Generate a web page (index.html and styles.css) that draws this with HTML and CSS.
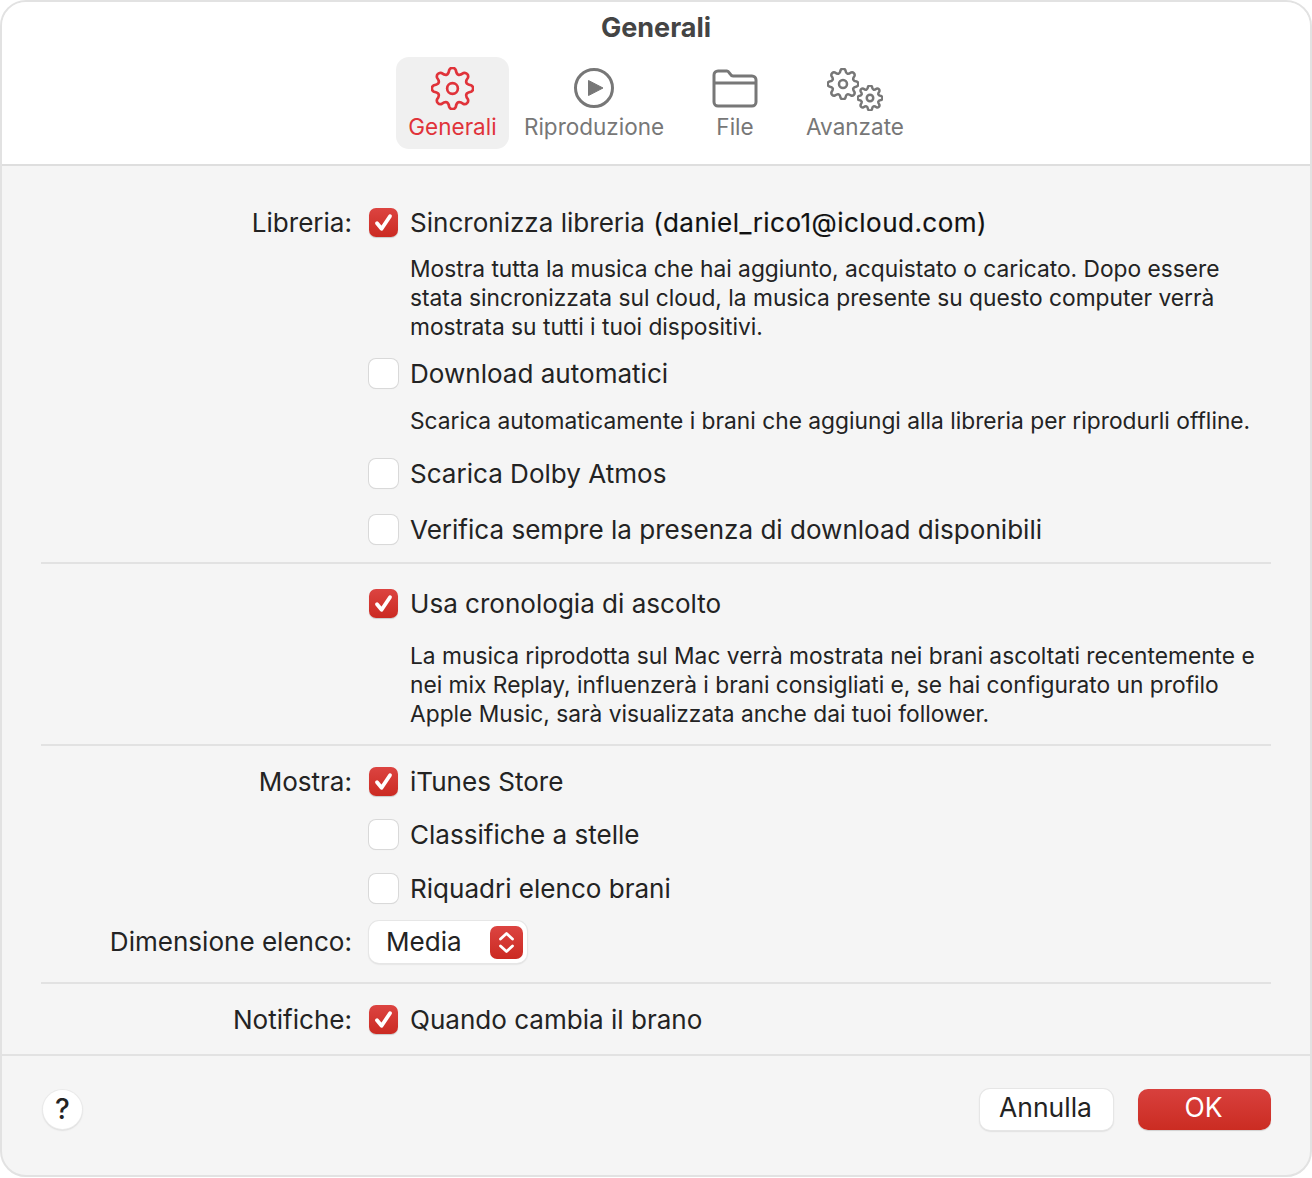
FILE: index.html
```html
<!DOCTYPE html>
<html lang="it">
<head>
<meta charset="utf-8">
<title>Generali</title>
<link rel="stylesheet" href="styles.css">
</head>
<body>
<svg class="defs" width="0" height="0" aria-hidden="true">
  <symbol id="gear" viewBox="0 0 48 48">
    <path d="M20.35 3.32A4 4 0 0 1 27.65 3.32Q28.98 11.99 36.05 6.8A4 4 0 0 1 41.2 11.95Q36.01 19.02 44.68 20.35A4 4 0 0 1 44.68 27.65Q36.01 28.98 41.2 36.05A4 4 0 0 1 36.05 41.2Q28.98 36.01 27.65 44.68A4 4 0 0 1 20.35 44.68Q19.02 36.01 11.95 41.2A4 4 0 0 1 6.8 36.05Q11.99 28.98 3.32 27.65A4 4 0 0 1 3.32 20.35Q11.99 19.02 6.8 11.95A4 4 0 0 1 11.95 6.8Q19.02 11.99 20.35 3.32Z"/>
    <circle cx="24" cy="24" r="6"/>
  </symbol>
  <symbol id="check" viewBox="0 0 29 29">
    <path d="M8 15.2l4.6 5.6L21 8.2"/>
  </symbol>
</svg>
<main class="window">
  <header class="header">
    <h1 class="title">Generali</h1>
    <nav class="tabs">
      <div class="tab tab-active">
        <svg class="gear-main" viewBox="0 0 48 48"><use href="#gear"/></svg>
        <span>Generali</span>
      </div>
      <div class="tab tab-play">
        <svg class="tab-icon" viewBox="0 0 48 48"><circle class="ring" cx="24" cy="24" r="18.500"/><path class="play" d="M18.500 16.500L33 24L18.500 31.500Z"/></svg>
        <span>Riproduzione</span>
      </div>
      <div class="tab tab-file">
        <svg class="tab-icon" viewBox="0 0 48 48"><path class="ring" d="M3 11a4 4 0 0 1 4-4h9c2.500 0 3 5 6 5h19a4 4 0 0 1 4 4v22a4 4 0 0 1-4 4H7a4 4 0 0 1-4-4zM3 19h42"/></svg>
        <span>File</span>
      </div>
      <div class="tab tab-adv">
        <span class="gears">
          <svg class="gear-big" viewBox="0 0 48 48"><use href="#gear"/></svg>
          <svg class="gear-small" viewBox="0 0 48 48"><use href="#gear"/></svg>
        </span>
        <span>Avanzate</span>
      </div>
    </nav>
  </header>

  <section class="content">
    <div class="group group-first">
      <div class="row">
        <span class="label">Libreria:</span>
        <span class="box on"><svg viewBox="0 0 29 29"><use href="#check"/></svg></span>
        <span class="text">Sincronizza libreria <span class="email">(daniel_rico1@icloud.com)</span></span>
      </div>
      <p class="desc desc-top">Mostra tutta la musica che hai aggiunto, acquistato o caricato. Dopo essere<br>stata sincronizzata sul cloud, la musica presente su questo computer verrà<br>mostrata su tutti i tuoi dispositivi.</p>
      <div class="row after-desc">
        <span class="label"></span>
        <span class="box"></span>
        <span class="text">Download automatici</span>
      </div>
      <p class="desc">Scarica automaticamente i brani che aggiungi alla libreria per riprodurli offline.</p>
      <div class="row gap-24">
        <span class="label"></span>
        <span class="box"></span>
        <span class="text">Scarica Dolby Atmos</span>
      </div>
      <div class="row gap-26">
        <span class="label"></span>
        <span class="box"></span>
        <span class="text">Verifica sempre la presenza di download disponibili</span>
      </div>
    </div>

    <div class="group group-history">
      <div class="row">
        <span class="label"></span>
        <span class="box on"><svg viewBox="0 0 29 29"><use href="#check"/></svg></span>
        <span class="text">Usa cronologia di ascolto</span>
      </div>
      <p class="desc desc-history">La musica riprodotta sul Mac verrà mostrata nei brani ascoltati recentemente e<br>nei mix Replay, influenzerà i brani consigliati e, se hai configurato un profilo<br>Apple Music, sarà visualizzata anche dai tuoi follower.</p>
    </div>

    <div class="group group-show">
      <div class="row">
        <span class="label">Mostra:</span>
        <span class="box on"><svg viewBox="0 0 29 29"><use href="#check"/></svg></span>
        <span class="text">iTunes Store</span>
      </div>
      <div class="row gap-23">
        <span class="label"></span>
        <span class="box"></span>
        <span class="text">Classifiche a stelle</span>
      </div>
      <div class="row gap-24">
        <span class="label"></span>
        <span class="box"></span>
        <span class="text">Riquadri elenco brani</span>
      </div>
      <div class="row gap-23">
        <span class="label">Dimensione elenco:</span>
        <span class="select">
          <span class="select-value">Media</span>
          <span class="stepper"><svg viewBox="0 0 33 33"><path d="M10.500 13L16.500 7.500L22.500 13M10.500 20L16.500 25.500L22.500 20"/></svg></span>
        </span>
      </div>
    </div>

    <div class="group group-last">
      <div class="row">
        <span class="label">Notifiche:</span>
        <span class="box on"><svg viewBox="0 0 29 29"><use href="#check"/></svg></span>
        <span class="text">Quando cambia il brano</span>
      </div>
    </div>
  </section>

  <footer class="footer">
    <button class="help" type="button">?</button>
    <div class="actions">
      <button class="btn" type="button">Annulla</button>
      <button class="btn btn-ok" type="button">OK</button>
    </div>
  </footer>
</main>
</body>
</html>
```

FILE: styles.css
```css
* { box-sizing: border-box; }
html, body { margin: 0; padding: 0; background: #fff; }
body { width: 1312px; height: 1178px; font-family: Inter, "Liberation Sans", sans-serif; color: #232323; }
.defs { position: absolute; }
.window {
  width: 1312px; height: 1177px;
  border: 2px solid #e2e2e2; border-radius: 26px;
  background: #f5f5f5; overflow: hidden;
  display: flex; flex-direction: column;
}
.header { height: 164px; background: #fff; border-bottom: 2px solid #dedede; flex: none; }
.title { margin: 0; padding-top: 9px; height: 55px; font-size: 27px; line-height: 34px; font-weight: 700; color: #444; text-align: center; }
.tabs { display: flex; justify-content: center; padding-left: 3px; }
.tab {
  width: 113px; height: 92px;
  display: flex; flex-direction: column; align-items: center;
  font-size: 22.500px; line-height: 28px; color: #777; border-radius: 13px;
}
.tab span { white-space: nowrap; }
.tab-active { background: #f0f0f0; color: #e0333a; }
.tab-play { width: 170px; }
.tab-file { width: 112px; }
.tab-adv { width: 128px; }
.tab-icon { width: 48px; height: 48px; margin-top: 7px; margin-bottom: 1px; display: block; overflow: visible; }
.gear-main { width: 43px; height: 43px; margin-top: 10px; margin-bottom: 3px; display: block; fill: none; stroke: #e0333a; stroke-width: 3; }
.ring { fill: none; stroke: #777; stroke-width: 3; }
.play { fill: #777; stroke: #777; stroke-width: 1; stroke-linejoin: round; }
.gears { position: relative; display: block; width: 56px; height: 48px; margin-top: 7px; margin-bottom: 1px; }
.gear-big, .gear-small { position: absolute; fill: none; stroke: #777; }
.gear-big { left: 0; top: 4px; width: 32px; height: 32px; stroke-width: 3.800; }
.gear-small { left: 30px; top: 21px; width: 26px; height: 26px; stroke-width: 4.600; }

.content { flex: 1; padding: 0 39px; }
.group { border-bottom: 2px solid #e2e2e2; }
.group-first { padding-top: 42px; padding-bottom: 17px; }
.group-history { padding-top: 25px; padding-bottom: 16px; }
.group-show { padding-top: 21px; padding-bottom: 25px; }
.group-last { padding-top: 21px; border-bottom: none; }
.row { display: flex; align-items: center; height: 30px; font-size: 26.050px; line-height: 30px; }
.label { width: 311px; margin-right: 17px; flex: none; text-align: right; }
.text { margin-left: 12px; white-space: nowrap; }
.email { color: #111; margin-left: 1px; letter-spacing: .45px; -webkit-text-stroke: .15px #111; }
.box {
  width: 29px; height: 29px; flex: none; margin-top: -2px; border-radius: 7px; background: #fff;
  box-shadow: 0 0 0 1px #d9d9d9, 0 1px 1px rgba(0,0,0,.1);
  display: block;
}
.box svg { display: block; width: 29px; height: 29px; fill: none; stroke: #fff; stroke-width: 3.800; stroke-linecap: round; stroke-linejoin: round; }
.box.on { background: linear-gradient(#dc4441, #cb2a22); box-shadow: 0 1px 1px rgba(0,0,0,.18); }
.desc { margin: 17px 0 0 369px; font-size: 22.750px; line-height: 29px; white-space: nowrap; }
.desc-top { margin-top: 16px; }
.desc-history { margin-top: 22px; }
.after-desc { margin-top: 18px; }
.gap-23 { margin-top: 23px; }
.gap-24 { margin-top: 24px; }
.gap-26 { margin-top: 26px; }
.select {
  width: 158px; height: 42px; flex: none; border-radius: 10px; background: #fff;
  box-shadow: 0 0 0 1px #e6e6e6, 0 1px 2px rgba(0,0,0,.2);
  display: flex; align-items: center; justify-content: space-between; padding: 0 4px 0 17px;
}
.stepper { width: 33px; height: 33px; border-radius: 7px; background: linear-gradient(#dc4441, #cb2a22); display: block; }
.stepper svg { display: block; width: 33px; height: 33px; fill: none; stroke: #fff; stroke-width: 2.800; stroke-linecap: round; stroke-linejoin: round; }

.footer {
  height: 121px; flex: none; border-top: 2px solid #e2e2e2;
  display: flex; justify-content: space-between; align-items: flex-start;
  padding: 33px 39px 0 41px;
}
.help {
  width: 39px; height: 39px; margin-top: 1px; padding: 0; border: none; border-radius: 50%; background: #fff;
  box-shadow: 0 0 0 1px #eaeaea, 0 1px 2px rgba(0,0,0,.25);
  font: 500 28px/39px Inter, "Liberation Sans", sans-serif; color: #232323;
}
.actions { display: flex; gap: 25px; }
.btn {
  width: 133px; height: 41px; padding: 0 2px 4px 0; border: none; border-radius: 10px; background: #fff;
  box-shadow: 0 0 0 1px #e6e6e6, 0 1px 2px rgba(0,0,0,.25);
  font: 400 26.500px/37px Inter, "Liberation Sans", sans-serif; color: #232323;
}
.btn-ok { background: linear-gradient(#d8403d, #cb2c22); color: #fff; box-shadow: 0 1px 1px rgba(0,0,0,.15); }
```
